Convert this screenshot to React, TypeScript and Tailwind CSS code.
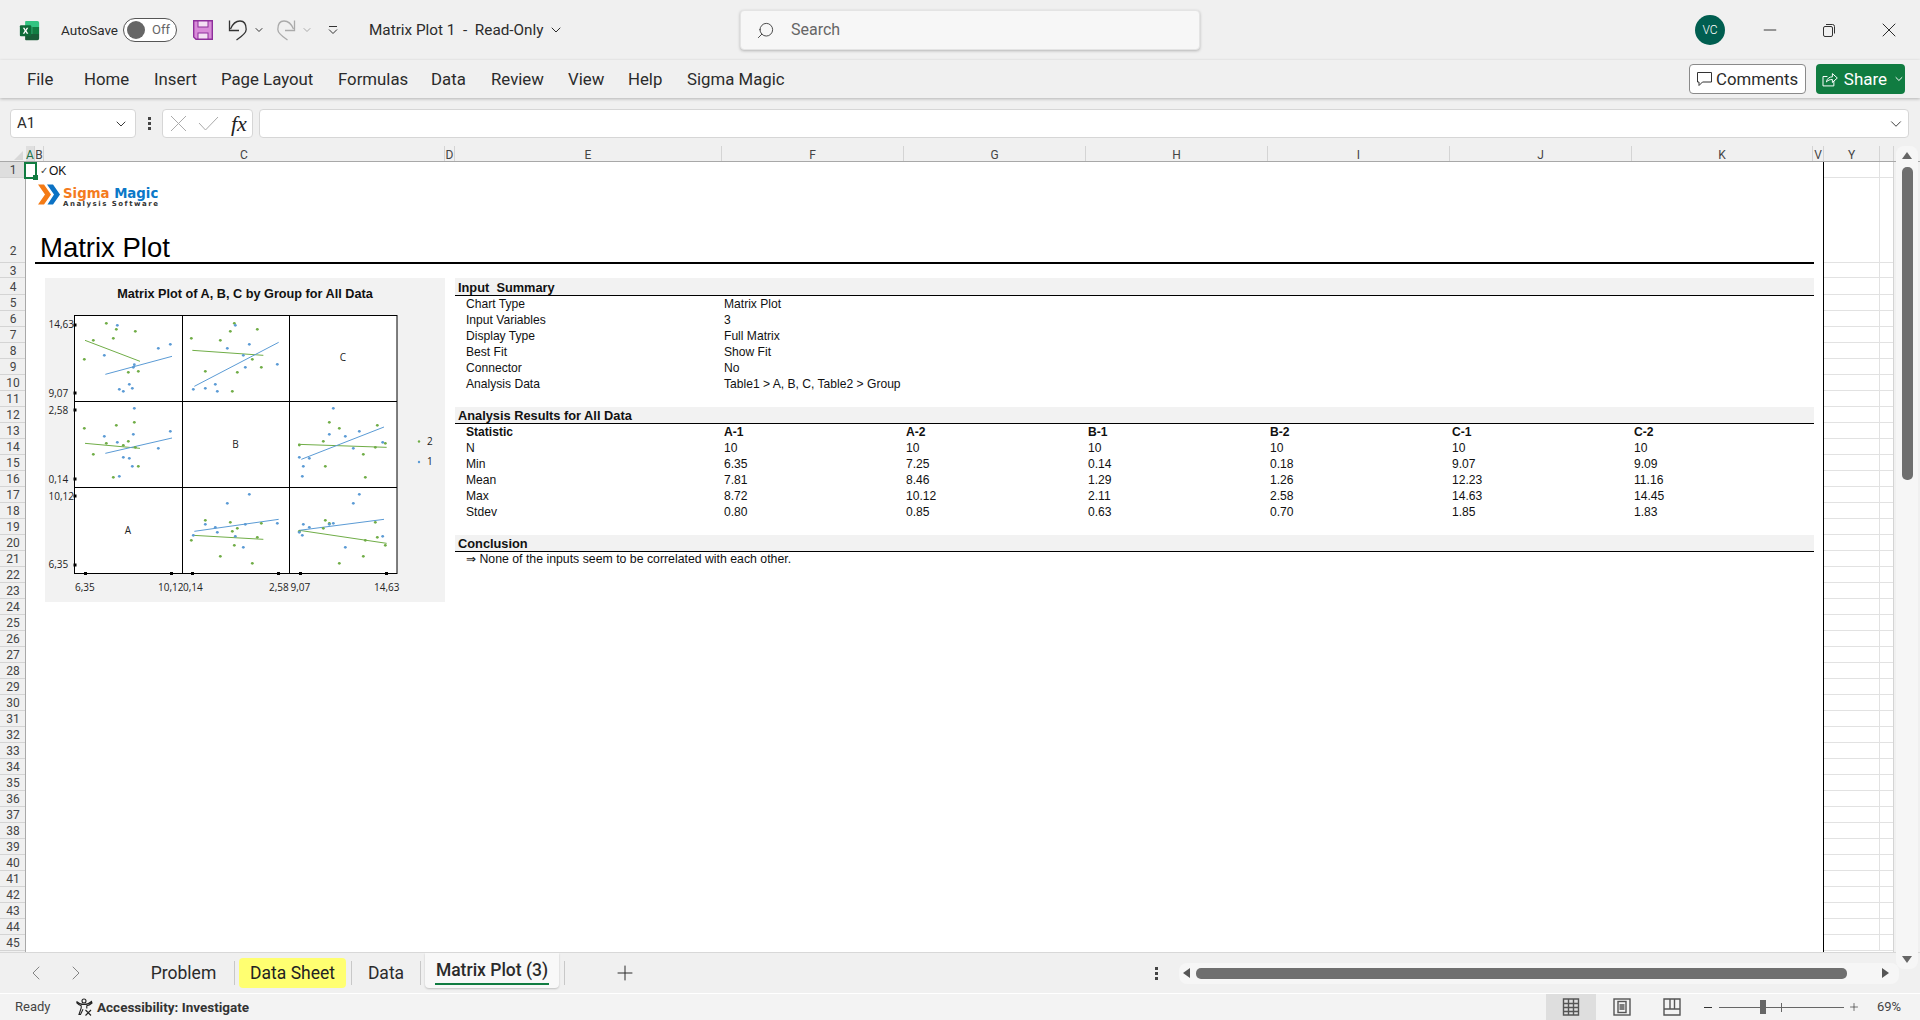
import React from "react";
import { ChevronDown, Search, X, Minus, Plus, ChevronLeft, ChevronRight } from "lucide-react";

type P = [number, number];
const Z = (p: P[]): P[] => p;
const panels: { g: P[]; b: P[]; gl: number[]; bl: number[] }[] = [
  {
    g: Z([[319,520],[349,538],[406,544],[340,565],[280,571],[253,628],[385,667],[415,664]]),
    b: Z([[352,526],[475,595],[511,583],[313,616],[403,644],[400,652],[388,703],[358,718],[370,724],[397,715]]),
    gl: [255,571,420,634], bl: [316,673,516,619],
  },
  {
    g: Z([[703,520],[691,544],[772,538],[574,565],[661,571],[757,628],[784,652],[712,667],[616,664],[697,724]]),
    b: Z([[706,526],[748,583],[682,595],[730,616],[736,652],[832,643],[580,718],[616,715],[646,703],[652,724]]),
    gl: [577,601,790,616], bl: [583,709,836,577],
  },
  {
    g: Z([[253,835],[349,826],[403,817],[319,880],[385,874],[370,886],[406,892],[280,913],[415,949],[340,982]]),
    b: Z([[403,775],[313,859],[400,853],[352,877],[511,844],[475,895],[370,922],[388,925],[397,949],[358,979]]),
    gl: [255,880,420,895], bl: [316,910,516,864],
  },
  {
    g: Z([[988,817],[1018,835],[1132,826],[970,874],[898,885],[1156,880],[1126,892],[1090,913],[976,949],[1096,982]]),
    b: Z([[1000,775],[988,853],[1036,859],[1078,844],[1148,877],[1060,895],[898,922],[928,925],[910,949],[907,979]]),
    gl: [895,883,1160,892], bl: [904,928,1152,831],
  },
  {
    g: Z([[616,1111],[691,1117],[784,1120],[697,1144],[712,1135],[574,1171],[772,1162],[703,1186],[661,1219],[757,1240]]),
    b: Z([[748,1033],[682,1060],[616,1123],[646,1132],[736,1123],[832,1120],[652,1147],[580,1156],[706,1159],[730,1192]]),
    gl: [580,1156,790,1168], bl: [583,1144,836,1108],
  },
  {
    g: Z([[976,1111],[988,1120],[970,1135],[1126,1117],[898,1144],[1096,1171],[1132,1162],[1156,1186],[1090,1219],[1018,1240]]),
    b: Z([[1078,1033],[1060,1060],[910,1123],[928,1132],[988,1123],[1000,1120],[1148,1159],[898,1147],[907,1156],[1036,1192]]),
    gl: [898,1141,1160,1180], bl: [898,1141,1152,1108],
  },
];
const GREEN = "#70ad47";
const BLUE = "#5b9bd5";

function MatrixChart() {
  const ax = (x: number) => x / 3;
  const ay = (y: number) => 150 + y / 3;
  const axisL: [string, number, number][] = [
    ["14,63", 48.5, 328], ["9,07", 48.5, 397], ["2,58", 48.5, 414],
    ["0,14", 48.5, 483], ["10,12", 48.5, 500], ["6,35", 48.5, 568],
    ["6,35", 75, 591], ["10,12", 158, 591], ["0,14", 183, 591],
    ["2,58", 269, 591], ["9,07", 290.5, 591], ["14,63", 374, 591],
  ];
  const squaresL = [324.5, 392.5, 409.5, 478.5, 495.5, 564.5];
  const squaresB = [85.5, 171.5, 192.5, 278.5, 300.5, 386.5];
  return (
    <svg width={400} height={324} viewBox="45 278 400 324" className="block font-['Open_Sans']">
      <text x={245} y={298} textAnchor="middle" fontSize={12.7} fontWeight={700} fill="#111" className="font-['Liberation_Sans']">
        Matrix Plot of A, B, C by Group for All Data
      </text>
      <rect x={74.5} y={315.5} width={322.5} height={258} fill="#fff" stroke="#000" strokeWidth={1} />
      <path d="M182.5 315.5V573.5M289.5 315.5V573.5M74.5 401.5H397M74.5 487.5H397" stroke="#000" fill="none" />
      {panels.map((p, i) => (
        <g key={i}>
          <line x1={ax(p.gl[0])} y1={ay(p.gl[1])} x2={ax(p.gl[2])} y2={ay(p.gl[3])} stroke={GREEN} strokeWidth={1} />
          <line x1={ax(p.bl[0])} y1={ay(p.bl[1])} x2={ax(p.bl[2])} y2={ay(p.bl[3])} stroke={BLUE} strokeWidth={1} />
          {p.g.map((d, j) => <circle key={j} cx={ax(d[0])} cy={ay(d[1])} r={1.4} fill={GREEN} />)}
          {p.b.map((d, j) => <circle key={j} cx={ax(d[0])} cy={ay(d[1])} r={1.4} fill={BLUE} />)}
        </g>
      ))}
      {squaresL.map((y) => <rect key={y} x={73.5} y={y - 1} width={3} height={3} fill="#000" />)}
      {squaresB.map((x) => <rect key={x} x={x - 1.5} y={572} width={3} height={3} fill="#000" />)}
      {axisL.map(([t, x, y], i) => (
        <text key={i} x={x} y={y} fontSize={10} fill="#222">{t}</text>
      ))}
      <text x={343} y={361} fontSize={10} fill="#222" textAnchor="middle">C</text>
      <text x={235.5} y={448} fontSize={10} fill="#222" textAnchor="middle">B</text>
      <text x={128} y={534} fontSize={10} fill="#222" textAnchor="middle">A</text>
      <circle cx={419} cy={441.5} r={1.2} fill={GREEN} />
      <circle cx={419} cy={462} r={1.2} fill={BLUE} />
      <text x={427} y={445} fontSize={10} fill="#222">2</text>
      <text x={427} y={465} fontSize={10} fill="#222">1</text>
    </svg>
  );
}

const ExcelLogo = () => (
  <svg width={21} height={21} viewBox="0 0 24 24">
    <path d="M8 1h13a2 2 0 0 1 2 2v5H7V2a1 1 0 0 1 1-1z" fill="#33c481" />
    <rect x={7} y={8} width={8} height={8} fill="#21a366" />
    <rect x={15} y={8} width={8} height={8} fill="#107c41" />
    <path d="M7 16h16v5a2 2 0 0 1-2 2H8a1 1 0 0 1-1-1z" fill="#185c37" />
    <rect x={1} y={6} width={13} height={12.5} rx={1.2} fill="#0e6b38" />
    <path d="M4.4 8.8h1.9l1.2 2.2 1.3-2.2h1.8l-2.1 3.4 2.2 3.5H8.8l-1.3-2.3-1.3 2.3H4.3l2.2-3.5z" fill="#fff" />
  </svg>
);

const SaveIcon = () => (
  <svg width={20} height={20} viewBox="0 0 20 20">
    <path d="M0.7 0.7H19.3V19.3H3L0.700 17Z" fill="#d98bd9" stroke="#8e2f9b" strokeWidth={1.4} />
    <rect x={5} y={1} width={10} height={6} fill="#f4dff4" stroke="#8e2f9b" />
    <rect x={5} y={13} width={10} height={6} fill="#f4dff4" stroke="#8e2f9b" />
  </svg>
);

const UndoIcon = ({ color }: { color: string }) => (
  <svg width={19} height={22} viewBox="0 0 19 22" fill="none" stroke={color} strokeWidth={1.3} className="shrink-0">
    <path d="M1.500 1.500V11.500H11" />
    <path d="M2.500 10C5 4 9 2 12 2C16.500 2 18.200 6 18.200 10.500C18.200 14 13 18 8.500 21" />
  </svg>
);
const RedoIcon = ({ color }: { color: string }) => (
  <svg width={19} height={22} viewBox="0 0 19 22" fill="none" stroke={color} strokeWidth={1.3} className="shrink-0 -scale-x-100">
    <path d="M1.500 1.500V11.500H11" />
    <path d="M2.500 10C5 4 9 2 12 2C16.500 2 18.200 6 18.200 10.500C18.200 14 13 18 8.500 21" />
  </svg>
);

const ShareIcon = () => (
  <svg width={16} height={16} viewBox="0 0 16 16" fill="none" stroke="#fff" strokeWidth={1}>
    <path d="M5.500 5.500H1V15H12V10" />
    <path d="M4.500 11C5 7.500 7.500 5.800 10.500 5.800V2.500L15.500 7L10.500 11.500V8.500C8 8.500 6 9.200 4.500 11Z" />
  </svg>
);

const CommentIcon = () => (
  <svg width={15} height={14} viewBox="0 0 15 14" fill="none" stroke="#333" strokeWidth={1} className="shrink-0">
    <path d="M0.500 0.500H14.500V10H5.500L2 13.500V10H0.500Z" />
  </svg>
);

const AccIcon = () => (
  <svg width={18} height={18} viewBox="0 0 18 18" fill="none" stroke="#222" strokeWidth={1.1}>
    <circle cx={9} cy={3} r={2} />
    <path d="M1.500 3.500C4 6 6 6.500 9 6.500S14 6 16.500 3.500L17 5C15 6.800 13 7.600 11.800 7.800V10.500" />
    <path d="M1.500 4.500C3 6 4.800 7.400 6.200 7.800V10L4 16.500H5.500L8 11.300" />
    <path d="M10.500 12L16 17.500M16 12L10.500 17.500" />
  </svg>
);

const GridView = () => (
  <svg width={18} height={18} viewBox="0 0 18 18" fill="none" stroke="#555" strokeWidth={1.4}>
    <path d="M1.500 1H16.500V17H1.500ZM1.500 5.500H16.500M1.500 9.500H16.500M1.500 13.500H16.500M6.500 1V17M11.500 1V17" />
  </svg>
);
const PageView = () => (
  <svg width={18} height={18} viewBox="0 0 18 18" fill="none" stroke="#555" strokeWidth={1.4}>
    <rect x={1} y={1} width={16} height={16} />
    <rect x={5} y={3.5} width={8} height={11} />
    <path d="M6.500 7H11.500M6.500 9H11.500M6.500 11H11.500" />
  </svg>
);
const BreakView = () => (
  <svg width={18} height={18} viewBox="0 0 18 18" fill="none" stroke="#555" strokeWidth={1.4}>
    <path d="M1 1H17V17H1ZM1 11H17V1M7 1V11M11.500 1V11" />
  </svg>
);

const menu: [string, number][] = [
  ["File", 27], ["Home", 84], ["Insert", 154], ["Page Layout", 221], ["Formulas", 338],
  ["Data", 431], ["Review", 491], ["View", 568], ["Help", 628], ["Sigma Magic", 687],
];

const cols: [string, number][] = [
  ["A", 9], ["B", 9], ["C", 401], ["D", 10], ["E", 267], ["F", 182], ["G", 182], ["H", 182],
  ["I", 182], ["J", 182], ["K", 181], ["V", 11], ["Y", 56], ["", 14],
];

const rows: [string, number][] = [
  ["1", 16], ["2", 85], ["3", 15], ["4", 17],
  ...Array.from({ length: 41 }, (_, i): [string, number] => [String(i + 5), 16]),
];

const Band = ({ children, tall }: { children: React.ReactNode; tall?: boolean }) => (
  <div className={`${tall ? "h-[18px] leading-[15px]" : "h-[17px] leading-[15px]"} bg-[#f2f2f2] border-b border-black pl-[3px] flex items-end text-[12.8px] font-bold text-[#111]`}>
    <span>{children}</span>
  </div>
);

const inputRows = [
  ["Chart Type", "Matrix Plot"], ["Input Variables", "3"], ["Display Type", "Full Matrix"],
  ["Best Fit", "Show Fit"], ["Connector", "No"], ["Analysis Data", "Table1 > A, B, C, Table2 > Group"],
];
const resultRows = [
  ["Statistic", "A-1", "A-2", "B-1", "B-2", "C-1", "C-2"],
  ["N", "10", "10", "10", "10", "10", "10"],
  ["Min", "6.35", "7.25", "0.14", "0.18", "9.07", "9.09"],
  ["Mean", "7.81", "8.46", "1.29", "1.26", "12.23", "11.16"],
  ["Max", "8.72", "10.12", "2.11", "2.58", "14.63", "14.45"],
  ["Stdev", "0.80", "0.85", "0.63", "0.70", "1.85", "1.83"],
];

export default function App() {
  return (
    <div className="w-[1920px] h-[1020px] overflow-hidden flex flex-col bg-[#f0f0f0] font-['Roboto',sans-serif] text-[#2b2b2b]">
      {/* Title bar */}
      <div className="h-[60px] shrink-0 flex items-center relative">
        <div className="ml-[19px] w-[42px] shrink-0 flex"><ExcelLogo /></div>
        <span className="w-[62px] shrink-0 text-[13.5px]">AutoSave</span>
        <div className="w-[54px] h-[24px] shrink-0 rounded-full border border-[#555] bg-white flex items-center pl-[3px] gap-[7px]">
          <span className="w-[18px] h-[18px] rounded-full bg-[#666]" />
          <span className="text-[13px] text-[#666]">Off</span>
        </div>
        <div className="ml-[16px] shrink-0"><SaveIcon /></div>
        <div className="ml-[15px] shrink-0 flex"><UndoIcon color="#333" /></div>
        <ChevronDown className="ml-[6px] shrink-0" size={12} color="#333" />
        <div className="ml-[12px] shrink-0 flex"><RedoIcon color="#aaa" /></div>
        <ChevronDown className="ml-[5px] shrink-0" size={12} color="#aaa" />
        <svg className="ml-[15px] shrink-0" width={10} height={10} viewBox="0 0 10 10" fill="none" stroke="#333"><path d="M1 1.500H9M1 4.500L5 8.500L9 4.500" /></svg>
        <span className="ml-[31px] shrink-0 text-[15.3px] whitespace-pre w-[178px]">Matrix Plot 1  -  Read-Only</span>
        <ChevronDown className="ml-[1px] shrink-0" size={16} strokeWidth={1.5} />
        <div className="ml-[176px] w-[460px] h-[40px] shrink-0 rounded-[4px] bg-[#f7f7f7] border border-[#e4e4e4] shadow-[0_1px_3px_rgba(0,0,0,0.25)] flex items-center">
          <Search className="ml-[15px] -scale-x-100" size={19} strokeWidth={1.2} color="#444" />
          <span className="ml-[16px] text-[16px] text-[#666]">Search</span>
        </div>
        <div className="ml-[495px] w-[30px] h-[30px] shrink-0 rounded-full bg-[#005e50] text-white text-[12px] font-light flex items-center justify-center">VC</div>
        <Minus className="ml-[35px] shrink-0" size={20} strokeWidth={1.1} />
        <svg className="ml-[42px] shrink-0" width={14} height={14} viewBox="0 0 14 14" fill="none" stroke="#333"><rect x={1.5} y={3.5} width={9} height={10} rx={1.5} /><path d="M4 1.500H10.500A2 2 0 0 1 12.500 3.500V10.500" /></svg>
        <X className="ml-[41px] shrink-0" size={24} strokeWidth={1} />
      </div>

      {/* Menu row */}
      <div className="h-[38px] shrink-0 flex items-center relative z-10 shadow-[0_1px_3px_rgba(0,0,0,0.25)] bg-[#f0f0f0]">
        <div className="flex w-[800px] shrink-0 text-[16.8px] pt-[2px]">
          {menu.map(([m, x], i) => (
            <span key={m} className="shrink-0" style={{ width: (i < menu.length - 1 ? menu[i + 1][1] : 800) - x, marginLeft: i === 0 ? x : 0 }}>{m}</span>
          ))}
        </div>
        <div className="ml-[889px] w-[117px] h-[30px] shrink-0 rounded-[4px] bg-white border border-[#8a8a8a] flex items-center pl-[7px] gap-[4px] text-[16.8px]">
          <CommentIcon />
          <span className="relative top-[1px]">Comments</span>
        </div>
        <div className="ml-[10px] w-[89px] h-[30px] shrink-0 rounded-[4px] bg-[#107c41] text-white flex items-center pl-[6px] gap-[6px] text-[17px]">
          <ShareIcon />
          <span className="relative top-[1px]">Share</span>
          <ChevronDown size={12} />
        </div>
      </div>

      {/* Formula bar */}
      <div className="h-[48px] shrink-0 flex items-center pl-[10px] pt-[3px]">
        <div className="w-[126px] h-[29px] shrink-0 rounded-[4px] bg-white border border-[#d6d6d6] flex items-center justify-between px-[6px] text-[15px]">
          <span>A1</span>
          <ChevronDown size={16} strokeWidth={1.4} />
        </div>
        <div className="w-[26px] shrink-0 flex flex-col items-center gap-[2px]">
          <span className="w-[3px] h-[3px] bg-[#444]" /><span className="w-[3px] h-[3px] bg-[#444]" /><span className="w-[3px] h-[3px] bg-[#444]" />
        </div>
        <div className="w-[91px] h-[29px] shrink-0 rounded-[4px] bg-white border border-[#d6d6d6] flex items-center pl-[7px]">
          <svg width={17} height={17} viewBox="0 0 17 17" fill="none" stroke="#aaa" className="shrink-0"><path d="M1 1L16 16M16 1L1 16" /></svg>
          <svg className="ml-[11px] shrink-0" width={21} height={15} viewBox="0 0 21 15" fill="none" stroke="#aaa"><path d="M1 7L7.500 14L20 1" /></svg>
          <span className="ml-[12px] font-['Liberation_Serif'] italic text-[22px] leading-[24px] text-[#222]">fx</span>
        </div>
        <div className="ml-[6px] w-[1650px] h-[29px] shrink-0 rounded-[4px] bg-white border border-[#d6d6d6] flex items-center justify-end pr-[3px]">
          <ChevronDown size={18} strokeWidth={1.2} />
        </div>
      </div>

      {/* Column headers */}
      <div className="h-[16px] shrink-0 flex border-b border-[#a8a8a8] text-[12px] text-[#444] leading-[19px]">
        <div className="w-[26px] shrink-0 relative overflow-hidden">
          <div className="w-0 h-0 ml-[14px] mt-[5px] border-l-[9px] border-l-transparent border-b-[9px] border-b-[#d8d8d8]" />
        </div>
        {cols.map(([c, w], i) => (
          <div key={i} style={{ width: w }} className={`shrink-0 text-center border-r border-[#d4d4d4] ${c === "A" ? "bg-[#dfdfdf] text-[#217346]" : ""}`}>{c}</div>
        ))}
      </div>

      {/* Grid */}
      <div className="h-[791px] shrink-0 flex relative border-b border-[#d8d8d8]">
        <div className="w-[26px] shrink-0 border-r border-[#a8a8a8] overflow-hidden text-[12px] text-[#444]">
          {rows.map(([r, h]) => (
            <div key={r} style={{ height: h }} className={`flex justify-center border-b border-[#d4d4d4] ${r === "1" ? "bg-[#dedede] items-center" : r === "2" ? "items-end pb-[4px]" : "items-center pt-[1px]"}`}>
              <span className="w-full text-center pl-[1px] leading-[14px]">{r}</span>
            </div>
          ))}
        </div>

        {/* Sheet */}
        <div className="w-[1798px] shrink-0 bg-white border-r border-black font-['Liberation_Sans',sans-serif] text-[#111] relative overflow-hidden">
          <div className="h-[16px] pl-[14px] text-[12px] leading-[18px] flex">
            <span className="text-[10px] text-[#444] w-[9px]">✓</span><span>OK</span>
          </div>
          <div className="h-[86px] ml-[9px] w-[1779px] border-b-2 border-black relative">
            <div className="flex items-start pt-[6px] pl-[3px]">
              <svg width={22} height={21} viewBox="0 0 22 21" className="shrink-0">
                <path d="M0 0.500H6L13 10.500L6 20.500H0L7 10.500Z" fill="#f47b16" />
                <path d="M9 0.500H15L22 10.500L15 20.500H9.500L16 10.500Z" fill="#0b72c4" />
              </svg>
              <div className="ml-[3px] mt-[3px] flex flex-col leading-none">
                <span className="font-['DejaVu_Sans'] font-bold text-[13.3px] leading-[13px] whitespace-pre">
                  <span className="text-[#f47b20]">Sigma </span><span className="text-[#0b78c8]">Magic</span>
                </span>
                <span className="font-['DejaVu_Sans'] text-[7px] font-bold leading-[9px] tracking-[1.5px] text-[#333]">Analysis Software</span>
              </div>
            </div>
            <div className="text-[27.5px] leading-[32px] pl-[5px] mt-[23px] text-black">Matrix Plot</div>
          </div>
          <div className="h-[14px]" />
          <div className="flex">
            <div className="ml-[19px] w-[400px] h-[324px] bg-[#f2f2f2] shrink-0"><MatrixChart /></div>
            <div className="ml-[10px] w-[1359px] shrink-0 text-[12.1px] leading-[16px]">
              <Band tall><span className="whitespace-pre">Input  Summary</span></Band>
              {inputRows.map(([a, b]) => (
                <div key={a} className="h-[16px] flex pl-[11px]">
                  <span className="w-[258px] shrink-0">{a}</span><span>{b}</span>
                </div>
              ))}
              <div className="h-[15px]" />
              <Band>Analysis Results for All Data</Band>
              {resultRows.map((r, i) => (
                <div key={r[0]} className={`h-[16px] grid grid-cols-[269px_182px_182px_182px_182px_182px_181px] pl-[11px] ${i === 0 ? "font-bold" : ""}`}>
                  {r.map((c, j) => <span key={j} className={j === 0 ? "w-[258px]" : "-ml-[11px]"}>{c}</span>)}
                </div>
              ))}
              <div className="h-[15px]" />
              <Band>Conclusion</Band>
              <div className="h-[16px] pl-[11px] whitespace-pre text-[12.3px] leading-[14px]">⇒ None of the inputs seem to be correlated with each other.</div>
            </div>
          </div>
        </div>

        {/* Right of sheet */}
        <div className="w-[70px] shrink-0 bg-white overflow-hidden border-r border-[#d4d4d4]">
          {rows.map(([r, h]) => (
            <div key={r} style={{ height: h }} className="border-b border-[#e2e2e2] flex">
              <div className="w-[56px] h-full border-r border-[#e2e2e2]" />
            </div>
          ))}
        </div>

        {/* Vertical scrollbar */}
        <div className="ml-[2px] w-[22px] my-[-16px] h-[823px] rounded-[8px] bg-[#f6f6f6] flex flex-col items-center shrink-0 z-10">
          <div className="mt-[6px] w-0 h-0 border-l-[5px] border-r-[5px] border-b-[7px] border-l-transparent border-r-transparent border-b-[#666]" />
          <div className="mt-[8px] w-[11px] h-[313px] rounded-[5px] bg-[#6f6f6f]" />
          <div className="mt-auto mb-[6px] w-0 h-0 border-l-[5px] border-r-[5px] border-t-[7px] border-l-transparent border-r-transparent border-t-[#666]" />
        </div>

        {/* Selected cell */}
        <div className="absolute left-[24px] top-0 w-[13px] h-[17px] border-2 border-[#107c41]" />
        <div className="absolute left-[33px] top-[13px] w-[5px] h-[5px] bg-[#107c41]" />
      </div>

      {/* Tabs */}
      <div className="h-[40px] shrink-0 flex items-center text-[17.5px] bg-[#f0f0f0]">
        <ChevronLeft className="ml-[24px] shrink-0" size={24} strokeWidth={0.9} color="#777" />
        <ChevronRight className="ml-[16px] shrink-0" size={24} strokeWidth={0.9} color="#777" />
        <div className="ml-[44px] w-[102px] h-[30px] pl-[1px] pt-[1px] shrink-0 flex items-center justify-center">Problem</div>
        <div className="w-px h-[24px] bg-[#c8c8c8] shrink-0" />
        <div className="ml-[4px] w-[107px] h-[30px] pt-[1px] shrink-0 rounded-[4px] bg-[#ffff71] text-[#222] flex items-center justify-center">Data Sheet</div>
        <div className="ml-[5px] w-px h-[24px] bg-[#c8c8c8] shrink-0" />
        <div className="w-[68px] h-[30px] pt-[1px] shrink-0 flex items-center justify-center">Data</div>
        <div className="w-px h-[24px] bg-[#c8c8c8] shrink-0" />
        <div className="ml-[4px] w-[134px] h-[35px] self-start shrink-0 rounded-b-[4px] bg-[#f8f8f8] shadow-[0_1px_2px_rgba(0,0,0,0.2)] flex flex-col items-center px-[10px] font-medium">
          <span className="mt-[6px] leading-[23px] whitespace-nowrap">Matrix Plot (3)</span>
          <span className="w-full h-[2px] mt-[1px] bg-[#107c41]" />
        </div>
        <div className="ml-[5px] w-px h-[24px] bg-[#c8c8c8] shrink-0" />
        <Plus className="ml-[48px] shrink-0" size={24} strokeWidth={1} />
        <div className="ml-[518px] w-[3px] shrink-0 flex flex-col gap-[2px]">
          <span className="h-[3px] bg-[#444]" /><span className="h-[3px] bg-[#444]" /><span className="h-[3px] bg-[#444]" />
        </div>
        <div className="ml-[21px] w-[720px] h-[21px] shrink-0 rounded-[8px] bg-[#f6f6f6] flex items-center px-[4px]">
          <div className="w-0 h-0 border-t-[5px] border-b-[5px] border-r-[7px] border-t-transparent border-b-transparent border-r-[#555]" />
          <div className="ml-[6px] w-[651px] h-[11px] rounded-[5px] bg-[#6f6f6f]" />
          <div className="ml-auto mr-[6px] w-0 h-0 border-t-[5px] border-b-[5px] border-l-[7px] border-t-transparent border-b-transparent border-l-[#555]" />
        </div>
      </div>

      {/* Status bar */}
      <div className="flex-1 flex items-center bg-[#f3f3f3] border-t border-white text-[13px]">
        <span className="ml-[15px] w-[60px] shrink-0 text-[#444]">Ready</span>
        <AccIcon />
        <span className="ml-[4px] font-bold text-[13.5px] text-[#333] w-[160px] shrink-0 whitespace-nowrap">Accessibility: Investigate</span>
        <div className="ml-[1289px] w-[50px] h-full shrink-0 bg-[#dedede] flex items-center justify-center"><GridView /></div>
        <div className="w-[51px] shrink-0 flex justify-center"><PageView /></div>
        <div className="w-[50px] shrink-0 flex justify-center"><BreakView /></div>
        <div className="ml-[7px] shrink-0 w-[8px] h-px bg-[#333]" />
        <div className="ml-[7px] w-[125px] h-px bg-[#666] shrink-0 relative">
          <div className="absolute left-[41px] top-[-7px] w-[6px] h-[14px] bg-[#666]" />
          <div className="absolute left-[62px] top-[-4px] w-px h-[9px] bg-[#666]" />
        </div>
        <Plus className="ml-[4px] shrink-0" size={12} strokeWidth={1.3} />
        <span className="ml-[17px] text-[#444] text-[13px]">69%</span>
      </div>
    </div>
  );
}
